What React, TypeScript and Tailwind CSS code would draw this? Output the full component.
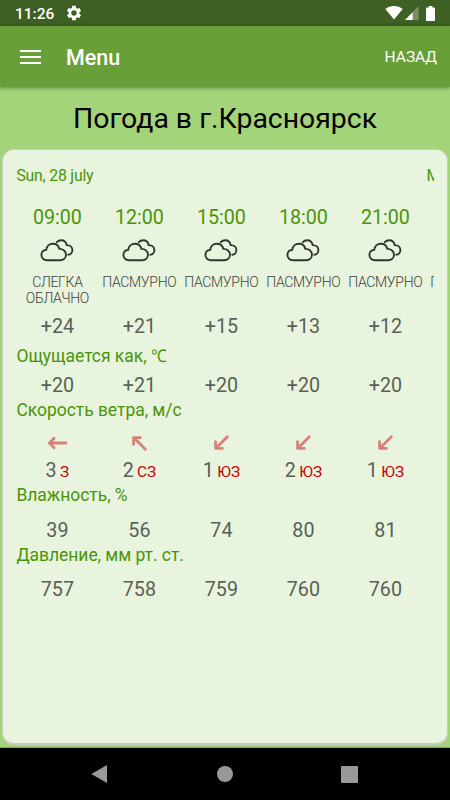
type Hour = {
  time: string;
  condition: string;
  temp: string;
  feels: string;
  wind: number;
  windDir: string;
  angle: number;
  humidity: number;
  pressure: number;
};

const days = ["Sun, 28 july", "Mon, 29 july"];

const hours: Hour[] = [
  { time: "09:00", condition: "СЛЕГКА ОБЛАЧНО", temp: "+24", feels: "+20", wind: 3, windDir: "З", angle: 0, humidity: 39, pressure: 757 },
  { time: "12:00", condition: "ПАСМУРНО", temp: "+21", feels: "+21", wind: 2, windDir: "СЗ", angle: 45, humidity: 56, pressure: 758 },
  { time: "15:00", condition: "ПАСМУРНО", temp: "+15", feels: "+20", wind: 1, windDir: "ЮЗ", angle: -45, humidity: 74, pressure: 759 },
  { time: "18:00", condition: "ПАСМУРНО", temp: "+13", feels: "+20", wind: 2, windDir: "ЮЗ", angle: -45, humidity: 80, pressure: 760 },
  { time: "21:00", condition: "ПАСМУРНО", temp: "+12", feels: "+20", wind: 1, windDir: "ЮЗ", angle: -45, humidity: 81, pressure: 760 },
];

function CloudIcon() {
  return (
    <svg width="34" height="24" viewBox="0 0 34 24" fill="none" stroke="#30362f" strokeWidth="1.9" strokeLinecap="round">
      <path d="M7 21.2C3.8 21.2 1.4 18.9 1.4 16C1.4 13.3 3.4 11.2 6.2 10.9C6.6 7.4 9.4 4.8 12.9 4.8C16.1 4.8 18.6 6.8 19.4 9.9C23 9.8 26 12.2 26 15.6C26 18.8 23.6 21.2 20.4 21.2Z" />
      <path d="M16.8 3.2C17.9 1.9 19.4 1.2 21.2 1.2C24.1 1.2 26.1 3 26.7 6.1C30 6.2 32.4 8.2 32.4 11.1C32.4 13.8 30.5 15.8 28.3 15.8" />
    </svg>
  );
}

function WindArrow({ angle }: { angle: number }) {
  return (
    <svg
      width="22"
      height="22"
      viewBox="0 0 22 22"
      fill="none"
      stroke="#d6827a"
      strokeWidth="2.8"
      strokeLinecap="round"
      strokeLinejoin="round"
      style={{ transform: `rotate(${angle}deg)` }}
    >
      <path d="M20 11H3.7M8.1 6.2L3.4 11l4.7 4.8" />
    </svg>
  );
}

function StatusBar() {
  return (
    <div className="flex h-[26px] items-center bg-[#3e6024] px-[15px] text-white">
      <span className="pt-[3px] text-[15.5px] font-medium leading-none">11:26</span>
      <svg className="ml-[11px]" width="18" height="18" viewBox="0 0 24 24" fill="currentColor">
        <path d="M19.14 12.94c.04-.3.06-.61.06-.94 0-.32-.02-.64-.07-.94l2.03-1.58a.49.49 0 0 0 .12-.61l-1.92-3.32a.49.49 0 0 0-.59-.22l-2.39.96c-.5-.38-1.03-.7-1.62-.94l-.36-2.54a.48.48 0 0 0-.48-.41h-3.84a.47.47 0 0 0-.47.41l-.36 2.54c-.59.24-1.13.57-1.62.94l-2.39-.96a.48.48 0 0 0-.59.22L2.74 8.87a.47.47 0 0 0 .12.61l2.03 1.58c-.05.3-.09.63-.09.94s.02.64.07.94l-2.03 1.58a.49.49 0 0 0-.12.61l1.92 3.32c.12.22.37.29.59.22l2.39-.96c.5.38 1.03.7 1.62.94l.36 2.54c.05.24.24.41.48.41h3.84c.24 0 .44-.17.47-.41l.36-2.54c.59-.24 1.13-.56 1.62-.94l2.39.96c.22.08.47 0 .59-.22l1.92-3.32a.47.47 0 0 0-.12-.61zM12 15.6a3.6 3.6 0 1 1 0-7.2 3.6 3.6 0 0 1 0 7.2z" />
      </svg>
      <div className="ml-auto flex items-center">
        <svg width="18" height="14" viewBox="0 0 18 14" fill="currentColor">
          <path d="M9 13.6L.3 3C2.7 1 5.7 0 9 0s6.3 1 8.7 3z" />
        </svg>
        <svg className="ml-0.5" width="14" height="14" viewBox="0 0 14 14" fill="currentColor">
          <path d="M13.6 0v14H0z" opacity="0.3" />
          <path d="M7.6 6.2V14H0z" />
        </svg>
        <svg className="ml-[7px]" width="9" height="15" viewBox="0 0 9 15" fill="currentColor">
          <path d="M2.7 0h3.6v1.4H8.2q.8 0 .8.8V14.2q0 .8-.8.8H.8q-.8 0-.8-.8V2.2q0-.8.8-.8h1.9z" />
        </svg>
      </div>
    </div>
  );
}

function Toolbar() {
  return (
    <header className="z-10 flex h-[61px] items-center bg-[#689f38] pl-5 pr-[13px] text-white shadow-[0_1px_4px_rgba(0,0,0,0.4)]">
      <div className="flex w-[21px] flex-col gap-1">
        <span className="h-0.5 bg-white" />
        <span className="h-0.5 bg-white" />
        <span className="h-0.5 bg-white" />
      </div>
      <h1 className="ml-[25px] pt-[3px] text-[21.5px] font-medium leading-none">Menu</h1>
      <button className="ml-auto pt-[2px] text-[15.5px] leading-none">НАЗАД</button>
    </header>
  );
}

function Label({ children }: { children: React.ReactNode }) {
  return <h3 className="h-6 whitespace-nowrap text-[17.5px] leading-6 tracking-[-0.04px] text-[#4a9408]">{children}</h3>;
}

function Row({ className, render }: { className: string; render: (hour: Hour) => React.ReactNode }) {
  return (
    <div className={`flex text-center ${className}`}>
      {hours.map((hour) => (
        <div key={hour.time} className="w-[82px] shrink-0">
          {render(hour)}
        </div>
      ))}
    </div>
  );
}

function Forecast() {
  return (
    <section className="mx-0.5 mb-0.5 flex-1 rounded-xl border border-b-2 border-[#c8cdc4] bg-[#e8f4de] px-[13px] pt-[14px] text-[#5a6057]">
      <div className="overflow-hidden pl-[0.4px]">
        <div className="flex h-6 text-[15.8px] leading-6 tracking-[-0.2px] text-[#4a9408]">
          {days.map((day) => (
            <h2 key={day} className="w-[410px] shrink-0">{day}</h2>
          ))}
        </div>
        <Row className="mt-[18px] h-6 text-[19.7px] leading-6" render={(h) => <span className="text-[#4a9408]">{h.time}</span>} />
        <Row className="h-11 pt-[9px]" render={(h) => <div className="flex justify-center"><CloudIcon /></div>} />
        <div className="flex h-8 text-center text-[14px] font-light leading-4 tracking-[-0.32px] text-[#3c423a]">
          {[...hours.map((h) => h.condition), "ПАСМУРНО"].map((condition, i) => (
            <div key={i} className="w-[82px] shrink-0">{condition}</div>
          ))}
        </div>
        <Row className="mt-[9px] h-6 text-[19.7px] leading-6" render={(h) => h.temp} />
        <div className="mt-[5px]">
          <Label>
            Ощущается как, <span className="inline-block origin-left scale-x-90">℃</span>
          </Label>
        </div>
        <Row className="mt-[6px] h-6 text-[19.7px] leading-6" render={(h) => h.feels} />
        <Label>Скорость ветра, м/с</Label>
        <Row className="mt-[10px] h-[26px]" render={(h) => <div className="flex justify-center"><WindArrow angle={h.angle} /></div>} />
        <Row
          className="mt-px h-6 text-[19.7px] leading-6"
          render={(h) => (
            <>
              {h.wind} <span className="-ml-[1.5px] text-[15.3px] text-[#c80000]">{h.windDir}</span>
            </>
          )}
        />
        <Label>Влажность, %</Label>
        <Row className="mt-[12px] h-6 text-[19.7px] leading-6" render={(h) => h.humidity} />
        <Label>Давление, мм рт. ст.</Label>
        <Row className="mt-[11px] h-6 text-[19.7px] leading-6" render={(h) => h.pressure} />
      </div>
    </section>
  );
}

function NavBar() {
  return (
    <nav className="flex h-[52px] items-center bg-black pl-[91px] text-[#999]">
      <svg width="16" height="18" viewBox="0 0 16 18" fill="currentColor">
        <path d="M16 0v18L.3 9z" />
      </svg>
      <div className="ml-[110px] size-4 rounded-full bg-[#999]" />
      <div className="ml-[108px] size-[17px] rounded-[1px] bg-[#999]" />
    </nav>
  );
}

export default function App() {
  return (
    <div className="flex h-[800px] w-[450px] flex-col overflow-hidden bg-[#a4d47a] font-[Roboto,sans-serif]">
      <StatusBar />
      <Toolbar />
      <main className="flex flex-1 flex-col border-b border-[#7fa85c]">
        <h2 className="h-[62px] text-center text-[28.4px] leading-[64px] text-black">Погода в г.Красноярск</h2>
        <Forecast />
      </main>
      <NavBar />
    </div>
  );
}
